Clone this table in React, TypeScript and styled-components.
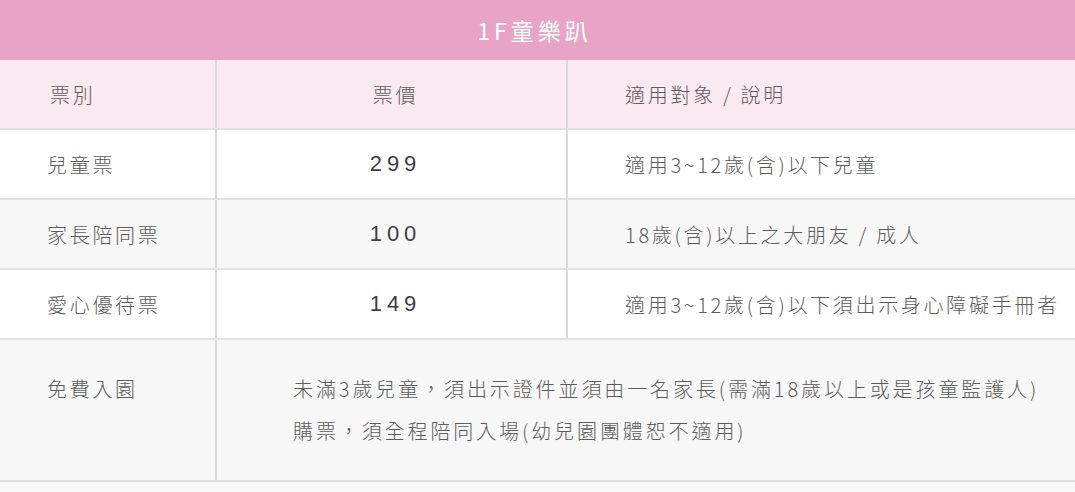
import React from "react";
import styled, { createGlobalStyle } from "styled-components";

const GlobalStyle = createGlobalStyle`
  html, body {
    margin: 0;
    padding: 0;
    background: #f8f8f8;
  }
  body {
    font-family: "Noto Sans CJK TC", "Noto Sans", sans-serif;
  }
`;

const Board = styled.section`
  width: 1075px;
  display: flex;
  flex-direction: column;
`;

const Title = styled.h2`
  margin: 0;
  height: 60px;
  display: flex;
  align-items: center;
  justify-content: center;
  padding-right: 6px;
  background: #e8a4c6;
  color: #ffffff;
  font-family: "Noto Sans CJK TC", "Noto Sans", sans-serif;
  font-size: 23px;
  font-weight: 400;
  letter-spacing: 4px;
`;

const Row = styled.div<{ $bg: string; $tall?: boolean }>`
  display: grid;
  grid-template-columns: 215px 351px 1fr;
  min-height: ${(p) => (p.$tall ? "140px" : "68px")};
  background: ${(p) => p.$bg};
  border-bottom: 2px solid #e1e1e1;
`;

const Cell = styled.div<{ $divider?: boolean; $span?: number }>`
  display: flex;
  align-items: center;
  box-sizing: border-box;
  color: #5c5c5c;
  font-size: 20px;
  font-weight: 300;
  letter-spacing: 2.7px;
  border-left: ${(p) => (p.$divider ? "2px solid #d9d9d9" : "none")};
  grid-column: ${(p) => (p.$span ? `span ${p.$span}` : "auto")};
`;

const NameCell = styled(Cell)`
  padding-left: 47px;
`;

const HeadNameCell = styled(Cell)`
  padding-left: 50px;
`;

const CenterCell = styled(Cell)`
  justify-content: center;
  padding-left: 8px;
`;

const PriceCell = styled(CenterCell)`
  font-family: "Liberation Sans", Arial, sans-serif;
  font-size: 22px;
  font-weight: 400;
  letter-spacing: 5px;
  color: #3b3e46;
`;

const DescCell = styled(Cell)`
  padding-left: 57px;
`;

const NoteNameCell = styled(NameCell)`
  align-items: flex-start;
  padding-top: 28px;
  line-height: 42px;
`;

const NoteCell = styled(Cell)`
  flex-direction: column;
  align-items: flex-start;
  padding-top: 28px;
  padding-left: 76px;
  line-height: 42px;
  letter-spacing: 2.9px;
`;

const NoteLine = styled.span`
  display: block;
  white-space: nowrap;
`;

type Ticket = { name: string; price: string; desc: string };

const tickets: Ticket[] = [
  { name: "兒童票", price: "299", desc: "適用3~12歲(含)以下兒童" },
  { name: "家長陪同票", price: "100", desc: "18歲(含)以上之大朋友 / 成人" },
  { name: "愛心優待票", price: "149", desc: "適用3~12歲(含)以下須出示身心障礙手冊者" },
];

export default function App() {
  return (
    <>
      <GlobalStyle />
      <Board>
        <Title>1F童樂趴</Title>
        <Row $bg="#fbe9f1">
          <HeadNameCell>票別</HeadNameCell>
          <CenterCell $divider>票價</CenterCell>
          <DescCell $divider>適用對象 / 說明</DescCell>
        </Row>
        {tickets.map((t, i) => (
          <Row key={t.name} $bg={i % 2 === 0 ? "#ffffff" : "#f7f7f7"}>
            <NameCell>{t.name}</NameCell>
            <PriceCell $divider>{t.price}</PriceCell>
            <DescCell $divider>{t.desc}</DescCell>
          </Row>
        ))}
        <Row $bg="#f7f7f7" $tall>
          <NoteNameCell>免費入園</NoteNameCell>
          <NoteCell $divider $span={2}>
            <NoteLine>未滿3歲兒童，須出示證件並須由一名家長(需滿18歲以上或是孩童監護人)</NoteLine>
            <NoteLine>購票，須全程陪同入場(幼兒園團體恕不適用)</NoteLine>
          </NoteCell>
        </Row>
      </Board>
    </>
  );
}
